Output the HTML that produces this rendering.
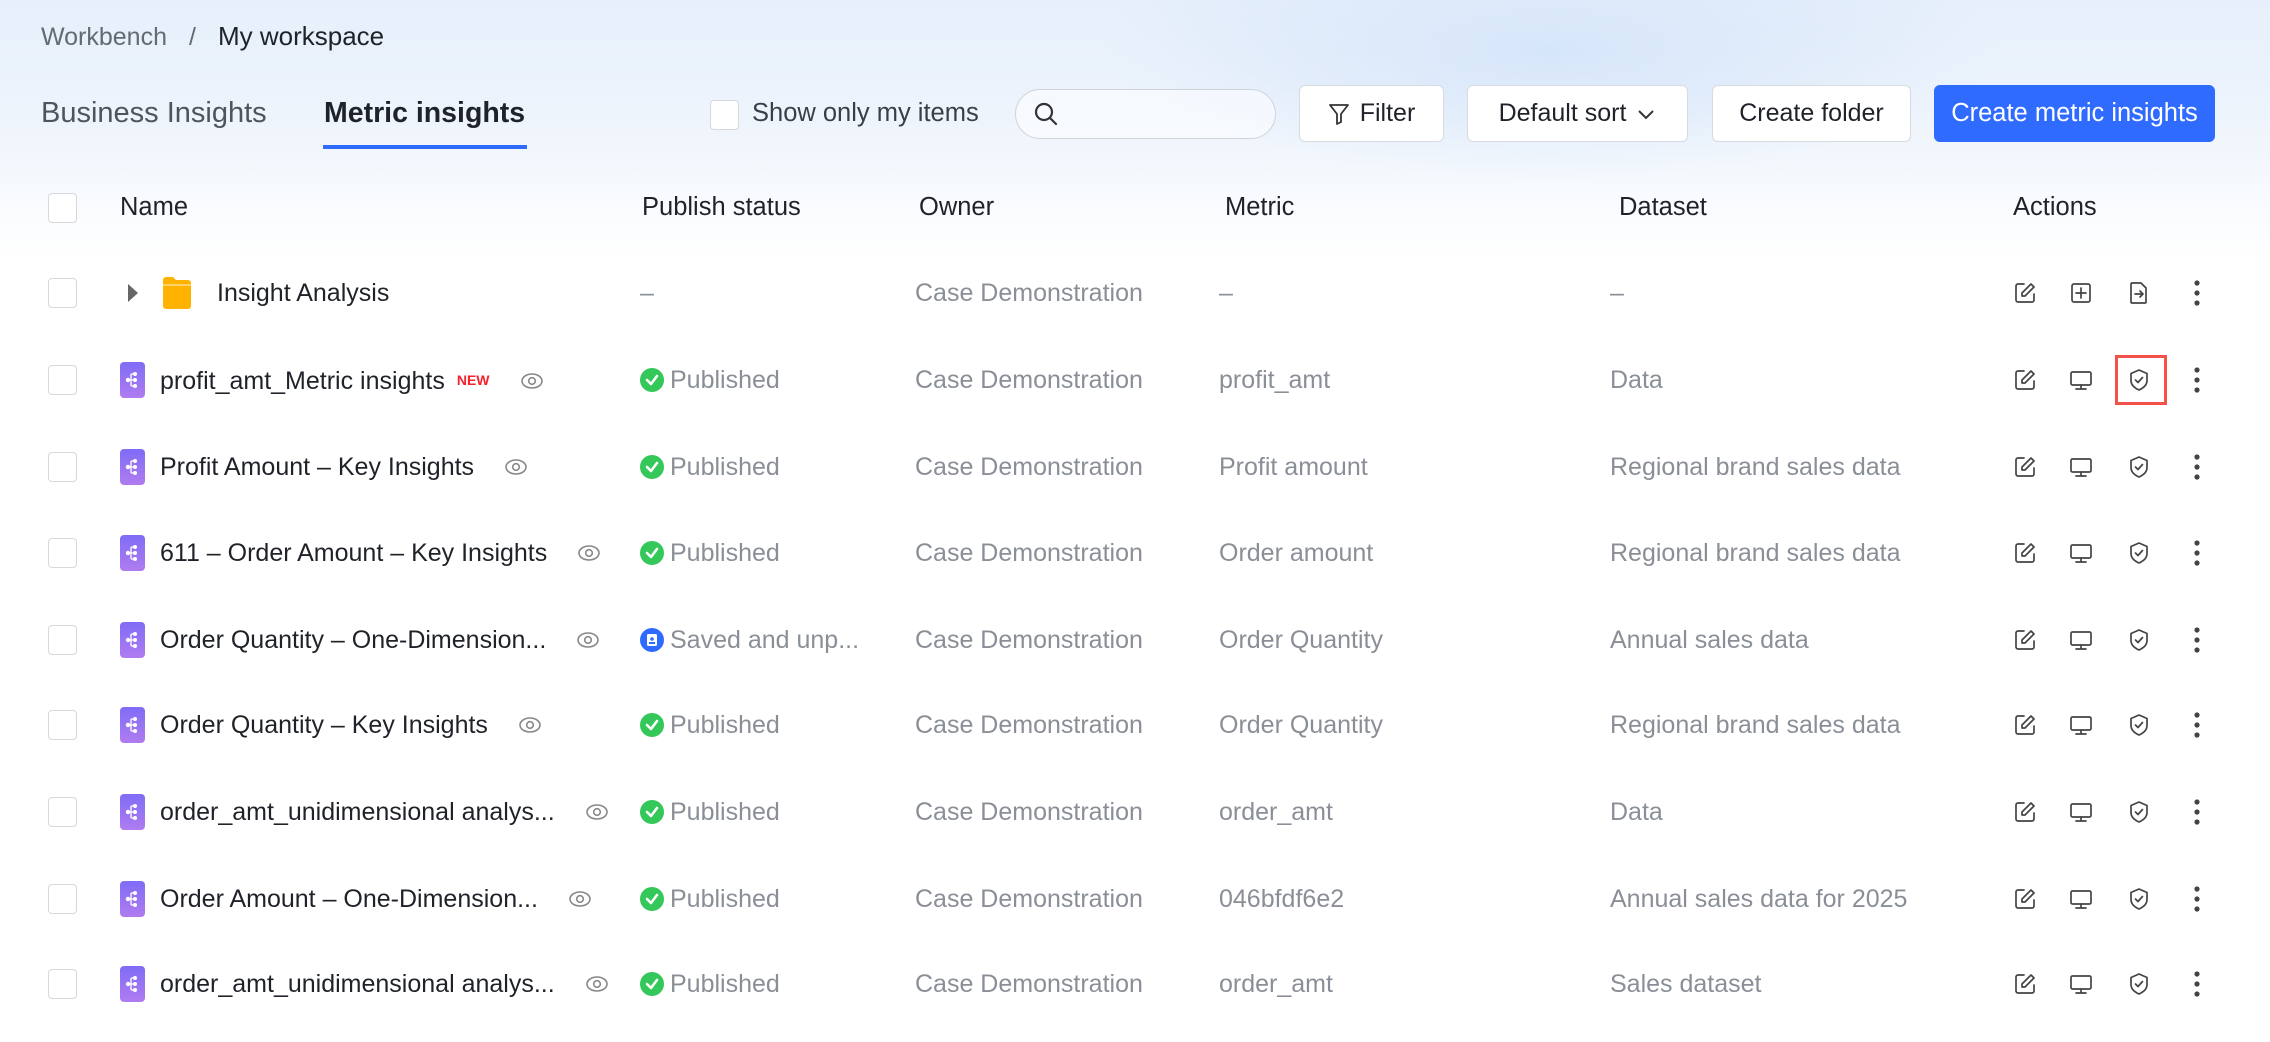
<!DOCTYPE html>
<html><head><meta charset="utf-8"><style>
*{margin:0;padding:0;box-sizing:border-box}
body{width:2270px;height:1042px;overflow:hidden;position:relative;font-family:"Liberation Sans",sans-serif;background:#fff}
.bg{position:absolute;left:0;top:0;width:2270px;height:260px;background:linear-gradient(180deg,#e6effb 0%,#eef4fc 45%,#ffffff 100%)}
.bg2{position:absolute;left:1100px;top:-80px;width:900px;height:260px;border-radius:50%;background:radial-gradient(ellipse,#d6e6fa 0%,rgba(220,234,250,0) 70%)}
.a{position:absolute;white-space:nowrap}
.cb{position:absolute;width:29px;height:30px;border:1.5px solid #d5d8dc;border-radius:4px;background:#fff}
.btn{position:absolute;top:85px;height:57px;border:1.5px solid #d7dae0;border-radius:6px;background:#fff;font-size:25px;color:#1f2329;display:flex;align-items:center;justify-content:center}
.h{font-size:25.5px;color:#1f2329;top:193px}
.t{font-size:25px;line-height:30px}
.dk{color:#1f2329}.gr{color:#8a8f97}
.mi{position:absolute;left:120px;width:25px;height:36px;border-radius:4px;background:linear-gradient(180deg,#7f6cf6,#b07cf0)}
.ic{position:absolute}
.eye{display:inline-block;vertical-align:-1px;margin-left:30px}
</style></head><body>
<div class="bg"></div><div class="bg2"></div>
<div class="a" style="left:41px;top:21px;font-size:25px;color:#646a73">Workbench<span style="display:inline-block;width:22px"></span>/<span style="display:inline-block;width:22px"></span><span style="color:#1f2329;font-size:26px">My workspace</span></div>
<div class="a" style="left:41px;top:97px;font-size:29px;color:#50555c">Business Insights</div>
<div class="a" style="left:324px;top:97px;font-size:28.5px;color:#1f2329;font-weight:bold">Metric insights</div>
<div style="position:absolute;left:323px;top:145px;width:204px;height:4px;background:#2f6bff"></div>
<div class="cb" style="left:710px;top:100px"></div>
<div class="a" style="left:752px;top:99px;font-size:25.5px;color:#3a3f45">Show only my items</div>
<div style="position:absolute;left:1015px;top:89px;width:261px;height:50px;border:1.5px solid #cfd4da;border-radius:25px;background:rgba(255,255,255,.5)"></div>
<svg class="ic" style="left:1033px;top:101px" width="26" height="26" viewBox="0 0 26 26"><circle cx="11" cy="11" r="8" fill="none" stroke="#333" stroke-width="2.2"/><path d="M17 17l6 6" stroke="#333" stroke-width="2.2" stroke-linecap="round"/></svg>
<div class="btn" style="left:1299px;width:145px"><svg width="22" height="24" viewBox="0 0 22 24" style="margin-right:10px"><path d="M2 3h18l-7 9v8l-4 2v-10z" fill="none" stroke="#333" stroke-width="1.8" stroke-linejoin="round"/></svg>Filter</div>
<div class="btn" style="left:1467px;width:221px">Default sort<svg width="20" height="14" viewBox="0 0 20 14" style="margin-left:10px"><path d="M3 4l7 7 7-7" fill="none" stroke="#333" stroke-width="2"/></svg></div>
<div class="btn" style="left:1712px;width:199px">Create folder</div>
<div class="btn" style="left:1934px;width:281px;background:#2f6bff;border-color:#2f6bff;color:#fff;font-size:25.5px">Create metric insights</div>

<div class="cb" style="left:48px;top:193px"></div>
<div class="a h" style="left:120px">Name</div>
<div class="a h" style="left:642px">Publish status</div>
<div class="a h" style="left:919px">Owner</div>
<div class="a h" style="left:1225px">Metric</div>
<div class="a h" style="left:1619px">Dataset</div>
<div class="a h" style="left:2013px">Actions</div>

<div id="rows"></div>
<script>
var rows=[
["Insight Analysis","–","–","–",0,0],
["profit_amt_Metric insights","Published","profit_amt","Data",1,1],
["Profit Amount – Key Insights","Published","Profit amount","Regional brand sales data",1,0],
["611 – Order Amount – Key Insights","Published","Order amount","Regional brand sales data",1,0],
["Order Quantity – One-Dimension...","Saved and unp...","Order Quantity","Annual sales data",2,0],
["Order Quantity – Key Insights","Published","Order Quantity","Regional brand sales data",1,0],
["order_amt_unidimensional analys...","Published","order_amt","Data",1,0],
["Order Amount – One-Dimension...","Published","046bfdf6e2","Annual sales data for 2025",1,0],
["order_amt_unidimensional analys...","Published","order_amt","Sales dataset",1,0]];
var centers=[293,380,467,553,640,725,812,899,984];
var h='';
var sw='fill="none" stroke="#444" stroke-width="1.7" stroke-linejoin="round" stroke-linecap="round"';
var eye='<svg class="eye" width="24" height="18" viewBox="0 0 24 18"><ellipse cx="12" cy="9" rx="10" ry="7" fill="none" stroke="#888" stroke-width="1.6"/><circle cx="12" cy="9" r="3.3" fill="none" stroke="#888" stroke-width="1.6"/></svg>';
rows.forEach(function(r,i){var c=centers[i],ty=c-15;
h+='<div class="cb" style="left:48px;top:'+(c-15)+'px"></div>';
if(r[4]==0){
h+='<svg class="ic" style="left:127px;top:'+(c-9)+'px" width="12" height="18"><path d="M1 0l10 9-10 9z" fill="#666"/></svg>';
h+='<svg class="ic" style="left:162px;top:'+(c-17)+'px" width="30" height="34" viewBox="0 0 30 34"><path d="M1 4a3 3 0 0 1 3-3h7l3 3h12a3 3 0 0 1 3 3v23a3 3 0 0 1-3 3H4a3 3 0 0 1-3-3z" fill="#ffb200"/><rect x="1" y="8" width="28" height="2" fill="#ffd266"/></svg>';
h+='<div class="a t dk" style="left:217px;top:'+ty+'px">'+r[0]+'</div>';
h+='<div class="a t gr" style="left:640px;top:'+ty+'px">–</div>';
}else{
h+='<div class="mi" style="top:'+(c-18)+'px"><svg width="25" height="36" viewBox="0 0 25 36"><g fill="#fff"><circle cx="8" cy="18" r="2.2"/><circle cx="15" cy="12" r="2"/><circle cx="15" cy="18" r="2"/><circle cx="15" cy="24" r="2"/></g><path d="M8 18h7M11 12v12M11 12h4M11 24h4" stroke="#fff" stroke-width="1.3"/></svg></div>';
h+='<div class="a t dk" style="left:160px;top:'+ty+'px">'+r[0]+(r[5]?'<span style="color:#f5222d;font-size:14px;font-weight:bold;vertical-align:4px;margin-left:12px">NEW</span>':'')+eye+'</div>';
if(r[4]==1) h+='<svg class="ic" style="left:640px;top:'+(c-12)+'px" width="24" height="24"><circle cx="12" cy="12" r="12" fill="#34c759"/><path d="M7 12l4 4 6-8" fill="none" stroke="#fff" stroke-width="2.6" stroke-linecap="round" stroke-linejoin="round"/></svg>';
else h+='<svg class="ic" style="left:640px;top:'+(c-12)+'px" width="24" height="24"><circle cx="12" cy="12" r="12" fill="#2f6bff"/><rect x="7" y="6" width="10" height="12" rx="1.5" fill="#fff"/><circle cx="12" cy="11" r="1.8" fill="#2f6bff"/><rect x="9" y="14" width="6" height="2" fill="#2f6bff"/></svg>';
h+='<div class="a t gr" style="left:670px;top:'+ty+'px">'+r[1]+'</div>';
}
h+='<div class="a t gr" style="left:915px;top:'+ty+'px">Case Demonstration</div>';
h+='<div class="a t gr" style="left:1219px;top:'+ty+'px">'+r[2]+'</div>';
h+='<div class="a t gr" style="left:1610px;top:'+ty+'px">'+r[3]+'</div>';
h+='<svg class="ic" style="left:2013px;top:'+(c-12)+'px" width="24" height="24" viewBox="0 0 24 24"><path d="M11 3H5a2 2 0 0 0-2 2v14a2 2 0 0 0 2 2h14a2 2 0 0 0 2-2v-6" '+sw+'/><path d="M18 3l3 3-9 9H9v-3z" '+sw+'/></svg>';
if(r[4]==0){
h+='<svg class="ic" style="left:2069px;top:'+(c-12)+'px" width="24" height="24" viewBox="0 0 24 24"><rect x="3" y="3" width="18" height="18" rx="2" '+sw+'/><path d="M12 7v10M7 12h10" '+sw+'/></svg>';
h+='<svg class="ic" style="left:2127px;top:'+(c-12)+'px" width="24" height="24" viewBox="0 0 24 24"><path d="M5 2h9l5 5v14a1 1 0 0 1-1 1H5a1 1 0 0 1-1-1V3a1 1 0 0 1 1-1z" '+sw+'/><path d="M8 13h8M13 10l3 3-3 3" '+sw+'/></svg>';
}else{
h+='<svg class="ic" style="left:2069px;top:'+(c-12)+'px" width="24" height="24" viewBox="0 0 24 24"><rect x="2" y="4" width="20" height="13" rx="1.5" '+sw+'/><path d="M12 17v4M7 21h10" '+sw+'/></svg>';
h+='<svg class="ic" style="left:2127px;top:'+(c-12)+'px" width="24" height="24" viewBox="0 0 24 24"><path d="M12 2l8 3.5v7c0 4.5-3.5 7.5-8 9.5-4.5-2-8-5-8-9.5v-7z" '+sw+'/><path d="M8.5 12l2.5 2.5 4.5-5" '+sw+'/></svg>';
}
h+='<svg class="ic" style="left:2193px;top:'+(c-14)+'px" width="8" height="28"><circle cx="4" cy="4" r="2.6" fill="#444"/><circle cx="4" cy="14" r="2.6" fill="#444"/><circle cx="4" cy="24" r="2.6" fill="#444"/></svg>';
if(r[5]) h+='<div style="position:absolute;left:2115px;top:'+(c-25)+'px;width:52px;height:50px;border:3px solid #f5514a"></div>';
});
document.getElementById('rows').innerHTML=h;
</script>
</body></html>
